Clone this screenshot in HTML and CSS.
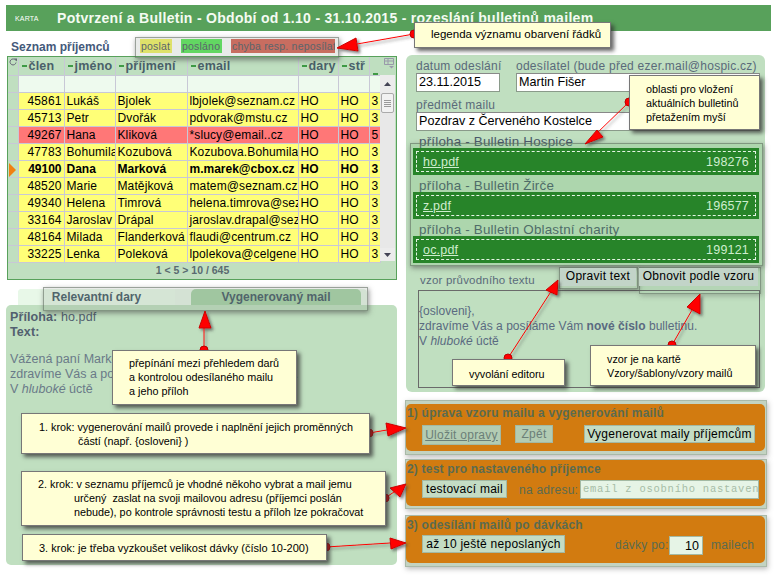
FILE: index.html
```html
<!DOCTYPE html>
<html lang="cs">
<head>
<meta charset="utf-8">
<title>Potvrzení a Bulletin</title>
<link rel="stylesheet" href="styles.css">
</head>
<body>
<div class="app">
  <header class="topbar"><span class="karta">KARTA</span><h1>Potvrzení a Bulletin - Období od 1.10 - 31.10.2015 - rozeslání bulletinů mailem</h1></header>
  <div class="columns">
    <section class="left">
      <div class="listhead">
        <h2>Seznam příjemců</h2>
        <div class="legend"><span class="lg-y">poslat</span><span class="lg-g">posláno</span><span class="lg-r">chyba resp. neposílat</span></div>
      </div>
      <div class="browse">
        <table>
          <colgroup><col class="c0"><col class="c1"><col class="c2"><col class="c3"><col class="c4"><col class="c5"><col class="c6"><col class="c7"></colgroup>
          <thead>
            <tr class="hd"><th><svg class="reload" width="8" height="8" viewBox="0 0 8 8"><path d="M6.5 2.2A3 3 0 1 0 7 4.5" fill="none" stroke="#667"/><path d="M5 .5h3v3z" fill="#667"/></svg></th><th><i></i>člen</th><th><i></i>jméno</th><th><i></i>příjmení</th><th><i></i>email</th><th><i></i>dary</th><th><i></i>stř</th><th class="last"><i></i></th></tr>
            <tr class="flt"><td></td><td></td><td></td><td></td><td></td><td></td><td></td><td></td></tr>
          </thead>
          <tbody>
            <tr><td></td><td class="n">45861</td><td>Lukáš</td><td>Bjolek</td><td>lbjolek@seznam.cz</td><td>HO</td><td>HO</td><td>3</td></tr>
            <tr><td></td><td class="n">45713</td><td>Petr</td><td>Dvořák</td><td>pdvorak@mstu.cz</td><td>HO</td><td>HO</td><td>3</td></tr>
            <tr class="err"><td></td><td class="n">49267</td><td>Hana</td><td>Kliková</td><td>*slucy@email..cz</td><td>HO</td><td>HO</td><td>5</td></tr>
            <tr><td></td><td class="n">47783</td><td>Bohumila</td><td>Kozubová</td><td>Kozubova.Bohumila</td><td>HO</td><td>HO</td><td>3</td></tr>
            <tr class="sel"><td class="mark"><b></b></td><td class="n">49100</td><td>Dana</td><td>Marková</td><td>m.marek@cbox.cz</td><td>HO</td><td>HO</td><td>3</td></tr>
            <tr><td></td><td class="n">48520</td><td>Marie</td><td>Matějková</td><td>matem@seznam.cz</td><td>HO</td><td>HO</td><td>3</td></tr>
            <tr><td></td><td class="n">49340</td><td>Helena</td><td>Timrová</td><td>helena.timrova@sez</td><td>HO</td><td>HO</td><td>3</td></tr>
            <tr><td></td><td class="n">33164</td><td>Jaroslav</td><td>Drápal</td><td>jaroslav.drapal@sez</td><td>HO</td><td>HO</td><td>3</td></tr>
            <tr><td></td><td class="n">48164</td><td>Milada</td><td>Flanderková</td><td>flaudi@centrum.cz</td><td>HO</td><td>HO</td><td>3</td></tr>
            <tr><td></td><td class="n">33225</td><td>Lenka</td><td>Poleková</td><td>lpolekova@celgene</td><td>HO</td><td>HO</td><td>3</td></tr>
          </tbody>
        </table>
        <div class="sbar">
          <div class="sbcfg"><svg width="11" height="11" viewBox="0 0 11 11"><path d="M.5.5h9v6h-9zM.5 3h9M4 .5v6" fill="none" stroke="#99a"/><path d="M5 8h5L7.5 10.500z" fill="#99a"/></svg></div>
          <div class="sbtrack">
            <div class="sbbtn up"><svg width="7" height="4" viewBox="0 0 7 4"><path d="M3.500 0 7 4H0z" fill="#445"/></svg></div>
            <div class="thumb"><i></i><i></i><i></i><i></i></div>
            <div class="sbfill"></div>
            <div class="sbbtn"><svg width="7" height="4" viewBox="0 0 7 4"><path d="M0 0h7L3.500 4z" fill="#445"/></svg></div>
          </div>
        </div>
        <div class="pager">1 &lt; 5 &gt; 10 / 645</div>
      </div>
      <div class="tabs"><div class="tab">Relevantní dary</div><div class="tab on">Vygenerovaný mail</div></div>
      <div class="tabpanel">
        <p class="meta"><b>Příloha:</b> ho.pdf<br><b>Text:</b></p>
        <p class="body">Vážená paní Marková,<br>zdravíme Vás a posíláme Vám <b>nové číslo</b> bulletinu.<br>V <em>hluboké</em> úctě</p>
      </div>
    </section>
    <section class="right">
      <div class="form">
        <div class="frow">
          <label class="fdate">datum odeslání<span class="inp">23.11.2015</span></label>
          <label class="fsend">odesílatel (bude před ezer.mail@hospic.cz)<span class="inp">Martin Fišer</span></label>
        </div>
        <label class="fsubj">předmět mailu<span class="inp">Pozdrav z Červeného Kostelce</span></label>
        <div class="drops">
          <div class="dlabel">příloha - Bulletin Hospice</div>
          <div class="drop"><div class="dash"><a>ho.pdf</a><span>198276</span></div></div>
          <div class="dlabel">příloha - Bulletin Žirče</div>
          <div class="drop"><div class="dash"><a>z.pdf</a><span>196577</span></div></div>
          <div class="dlabel">příloha - Bulletin Oblastní charity</div>
          <div class="drop"><div class="dash"><a>oc.pdf</a><span>199121</span></div></div>
        </div>
        <div class="vzorhead">
          <span class="vzorlabel">vzor průvodního textu</span>
          <span class="hbtn b1">Opravit text</span>
          <span class="hbtn b2">Obnovit podle vzoru</span>
        </div>
        <div class="vzor">{osloveni},<br>zdravíme Vás a posíláme Vám <b>nové číslo</b> bulletinu.<br>V <em>hluboké</em> úctě</div>
      </div>
      <div class="step s1">
        <div class="steph">1) úprava vzoru mailu a vygenerování mailů</div>
        <div class="stepb"><span class="btn off u">Uložit opravy</span><span class="btn off z">Zpět</span><span class="btn gen">Vygenerovat maily příjemcům</span></div>
      </div>
      <div class="step s2">
        <div class="steph">2) test pro nastaveného příjemce</div>
        <div class="stepb"><span class="btn tst">testovací mail</span><span class="lab adr">na adresu:</span><span class="mailinp">email z osobního nastaven</span></div>
      </div>
      <div class="step s3">
        <div class="steph">3) odesílání mailů po dávkách</div>
        <div class="stepb"><span class="btn dvk">až 10 ještě neposlaných</span><span class="lab dav">dávky po:</span><span class="numinp">10</span><span class="lab">mailech</span></div>
      </div>
    </section>
  </div>

  <div class="hl hl-legend"></div>
  <div class="hl hl-tabs"></div>
  <div class="hl hl-drops"></div>
  <div class="hl hl-b1"></div>
  <div class="hl hl-b2"></div>
  <div class="hl hl-s1"></div>
  <div class="hl hl-s2"></div>
  <div class="hl hl-s3"></div>

  <svg class="arrows" width="778" height="577" viewBox="0 0 778 577">
    <defs><filter id="sh" x="-30%" y="-30%" width="180%" height="180%"><feDropShadow dx="2" dy="2" stdDeviation="1.500" flood-color="#444" flood-opacity=".7"/></filter></defs>
    <g stroke="#f00" stroke-width="1" fill="#f00" filter="url(#sh)">
      <path d="M414 34 357 44"/><path d="M337 48 356 38 358 51z" stroke="#c00"/>
      <path d="M629 102 594 136"/><path d="M585 144 597 130 603 137z" stroke="#c00"/>
      <path d="M204 350V328"/><path d="M205 311 199 328H211z" stroke="#c00"/>
      <path d="M369 433 387 430"/><path d="M406 428 386 423 388 436z" stroke="#c00"/>
      <path d="M385 498 397 490"/><path d="M406 484 390 488 400 497z" stroke="#c00"/>
      <path d="M326 547 390 543"/><path d="M406 543 390 538 391 549z" stroke="#c00"/>
      <path d="M508 358 552 290"/><path d="M558 280 546 290 557 295z" stroke="#c00"/>
      <path d="M672 345 692 310"/><path d="M700 294 687 307 700 314z" stroke="#c00"/>
    </g>
    <g fill="#f00" stroke="#b00">
      <circle cx="414" cy="34" r="4"/><circle cx="629" cy="102" r="4"/><circle cx="204" cy="350" r="4"/><circle cx="369" cy="433" r="4"/><circle cx="385" cy="498" r="4"/><circle cx="326" cy="547" r="4"/><circle cx="508" cy="358" r="4"/><circle cx="672" cy="345" r="4"/>
    </g>
  </svg>

  <div class="note n-leg">legenda významu obarvení řádků</div>
  <div class="note n-obl">oblasti pro vložení<br>aktuálních bulletinů<br>přetažením myší</div>
  <div class="note n-tab">přepínání mezi přehledem darů<br>a kontrolou odesílaného mailu<br>a jeho příloh</div>
  <div class="note n-k1"><span>1. krok: vygenerování mailů provede i naplnění jejich proměnných</span><br><span class="ind1">částí (např. {osloveni} )</span></div>
  <div class="note n-k2"><span>2. krok: v seznamu příjemců je vhodné někoho vybrat a mail jemu</span><br><span class="ind2">určený &nbsp;zaslat na svoji mailovou adresu (příjemci poslán</span><br><span class="ind2">nebude), po kontrole správnosti testu a příloh lze pokračovat</span></div>
  <div class="note n-k3">3. krok: je třeba vyzkoušet velikost dávky (číslo 10-200)</div>
  <div class="note n-edi">vyvolání editoru</div>
  <div class="note n-vz">vzor je na kartě<br>Vzory/šablony/vzory mailů</div>
</div>
</body>
</html>
```

FILE: styles.css
```css
* { box-sizing: border-box; }
html, body { margin: 0; padding: 0; background: #fff; }
body { font-family: "Liberation Sans", Arial, sans-serif; font-size: 12px; color: #000; overflow: hidden; }
.app { position: relative; width: 778px; height: 577px; overflow: hidden; padding-top: 5px; }

.topbar { display: flex; align-items: center; margin: 0 7px 0 6px; height: 26px; background: #58a15b; color: #fff; padding-left: 9px; }
.karta { font-size: 7px; width: 42px; letter-spacing: .2px; }
.topbar h1 { margin: 0; font-size: 14px; font-weight: bold; letter-spacing: .29px; white-space: nowrap; color: #f4fbf2; }

.columns { display: flex; align-items: flex-start; }
.left { width: 391px; margin-left: 6px; }
.right { width: 359px; margin-left: 9px; margin-top: 24px; }

.listhead { height: 25px; display: flex; align-items: flex-end; position: relative; }
.listhead h2 { margin: 0 0 2px 5px; font-size: 12px; font-weight: bold; color: #44597a; width: 129px; }
.legend { display: flex; font-size: 10.500px; letter-spacing: .2px; color: #56606a; margin-bottom: 3px; height: 14px; line-height: 14px; }
.lg-y { background: #f4f468; width: 32px; padding-left: 1px; margin-right: 9px; }
.lg-g { background: #5fe85f; width: 41px; padding-left: 1px; margin-right: 9px; }
.lg-r { background: #d8695c; width: 104px; padding-left: 1px; white-space: nowrap; overflow: hidden; }

.browse { position: relative; margin-left: 1px; width: 390px; height: 224px; border: 1px solid #58a15b; background: #c0dfc0; display: grid; grid-template-columns: 372px 16px; grid-template-rows: 204px 18px; }
.browse table { border-collapse: collapse; table-layout: fixed; width: 372px; font-size: 12px; }
.c0 { width: 10px; } .c1 { width: 46px; } .c2 { width: 51px; } .c3 { width: 72px; } .c4 { width: 111px; } .c5 { width: 40px; } .c6 { width: 31px; } .c7 { width: 11px; }
.browse th, .browse td { border-right: 1px solid #c8c8d6; border-bottom: 1px solid #c8c8d6; padding: 0 0 0 2px; white-space: nowrap; overflow: hidden; height: 17px; line-height: 16px; }
.hd th { background: #bfdfc0; height: 18px; text-align: left; font-weight: bold; color: #4a5f6a; font-size: 12.500px; letter-spacing: .2px; padding-left: 3px; }
.hd th i { display: inline-block; width: 5px; height: 2px; background: #3f9a45; margin-right: 2px; vertical-align: 3px; }
.hd th:first-child { padding: 0; position: relative; }
.hd th.last i { vertical-align: -6px; }
.reload { position: absolute; left: 1px; top: 1px; }
.flt td { background: #eefaee; height: 17px; }
.browse tbody td { background: #ffff77; letter-spacing: .12px; }
.browse tbody td:first-child, .flt td:first-child { background: #c0dfc0; }
.browse tbody .err td { background: #ff7777; }
.browse tbody .err td:first-child { background: #c0dfc0; }
.browse .n { text-align: right; padding-right: 2px; padding-left: 0; }
.sel td { font-weight: bold; letter-spacing: 0 !important; }
.browse td.mark { padding: 0; }
.mark b { display: block; width: 0; height: 0; border-left: 7px solid #f08010; border-top: 7px solid transparent; border-bottom: 7px solid transparent; margin: 1px 0 0 1px; }

.sbar { display: flex; flex-direction: column; background: #c0dfc0; }
.sbcfg { height: 18px; padding: 1px 0 0 4px; background: #bfdfc0; }
.sbcfg svg { display: block; }
.sbtrack { flex: 1; display: flex; flex-direction: column; background: #e8e8e8; width: 15px; }
.sbbtn { height: 13px; display: flex; align-items: center; justify-content: center; background: #ececec; }
.sbbtn.up { height: 18px; }
.thumb { height: 20px; margin: 0 1px; border: 1px solid #aaa; border-radius: 2px; background: #f2f2f2; display: flex; flex-direction: column; justify-content: center; gap: 1px; padding: 0 2px; }
.thumb i { height: 1px; background: #999; display: block; }
.sbfill { flex: 1; }
.pager { grid-column: 1 / 3; text-align: center; font-weight: bold; font-size: 10.500px; line-height: 18px; color: #5a6a70; padding-right: 19px; }

.tabs { display: flex; height: 16px; margin: 9px 0 0 12px; background: #e6f5e6; border-radius: 4px 4px 0 0; width: 349px; font-weight: bold; color: #4a5f6a; line-height: 16px; text-align: center; }
.tab { width: 157px; background: #e8f8e8; border-radius: 4px 0 0 0; }
.tab.on { width: 170px; margin-left: 16px; background: #a9d3a9; border-radius: 5px 5px 0 0; }
.tabpanel { height: 260px; background: #c0dfc0; border-radius: 5px; padding: 5px 4px; color: #52606f; font-size: 12.500px; line-height: 15px; }
.tabpanel p { margin: 0; }
.tabpanel .body { margin-top: 12px; color: #6a7a88; }
.meta { letter-spacing: .1px; }

.form { height: 337px; background: #c0dfc0; border-radius: 6px; padding: 4px 5px 0 10px; color: #5a6a7a; letter-spacing: .25px; }
.frow { display: flex; }
label { display: block; font-size: 12px; line-height: 15px; }
.inp { display: block; height: 19px; background: #fff; border: 1px solid #8a9a8a; border-top-color: #888; color: #000; font-size: 12.600px; line-height: 17px; padding-left: 2px; white-space: nowrap; margin-top: -1px; letter-spacing: 0; }
.fdate { width: 84px; white-space: nowrap; }
.fsend { width: 244px; margin-left: 16px; white-space: nowrap; }
.fsubj { width: 344px; margin-top: 6px; }
.drops { margin: 0 0 0 -3px; width: 346px; }
.dlabel { height: 17px; line-height: 22px; padding-left: 6px; font-size: 13.400px; letter-spacing: .2px; color: #4a5a6a; white-space: nowrap; }
.drop { position: relative; z-index: 1; height: 27px; background: #278429; padding: 3px; }
.dash { height: 21px; border: 1px dashed #e4f4e4; display: flex; justify-content: space-between; align-items: center; padding: 0 6px; color: #cfeecf; font-size: 12.500px; letter-spacing: .2px; }
.dash a { text-decoration: underline; }
.vzorhead { position: relative; height: 27px; display: flex; }
.vzorlabel { margin: 10px 0 0 4px; width: 140px; white-space: nowrap; font-size: 11.500px; letter-spacing: .2px; line-height: 15px; }
.hbtn { display: block; position: relative; z-index: 1; height: 18px; margin-top: 5px; line-height: 17px; color: #000; font-size: 12px; letter-spacing: .25px; text-align: center; white-space: nowrap; background: #c2d4c8; }
.b1 { width: 76px; }
.b2 { width: 119px; margin-left: 3px; }
.vzor { width: 342px; height: 98px; border: 1px solid #6a6a6a; margin: 0 0 0 2px; padding-top: 13px; font-size: 12px; line-height: 15px; letter-spacing: .03px; color: #5a6a80; white-space: nowrap; overflow: hidden; }

.step { position: relative; z-index: 1; background: #d27b10; border-radius: 5px; padding: 2px 0 0 1px; }
.s1 { height: 47px; margin-top: 12px; }
.s2 { height: 46px; margin-top: 9px; }
.s3 { height: 47px; margin-top: 10px; }
.steph { font-weight: bold; font-size: 12px; letter-spacing: .2px; color: #5a6b50; line-height: 14px; }
.stepb { display: flex; align-items: flex-start; padding: 5px 0 0 15px; }
.s2 .stepb { padding-top: 4px; }
.s3 .stepb { padding-top: 3px; }
.btn { display: block; height: 18px; line-height: 16px; background: #c4dcc4; border: 1px solid #a3b9a3; color: #000; font-size: 12px; letter-spacing: .25px; text-align: center; white-space: nowrap; }
.btn.off { color: #6b7f78; background: #b3ccb3; }
.u { height: 20px; text-decoration: underline; width: 79px; line-height: 18px; }
.z { margin-left: 14px; width: 38px; }
.gen { margin-left: 31px; width: 171px; }
.tst { width: 85px; }
.dvk { width: 143px; }
.lab { color: #5a6b50; font-size: 12px; letter-spacing: .25px; line-height: 18px; padding-top: 1px; white-space: nowrap; }
.adr { margin-left: 12px; width: 61px; }
.mailinp { width: 179px; height: 19px; background: #e6f4e6; border: 1px solid #a3b9a3; font-family: "Liberation Mono", monospace; font-size: 10.500px; letter-spacing: .75px; color: #a7bda7; line-height: 17px; padding-left: 2px; white-space: nowrap; overflow: hidden; }
.dav { margin-left: 50px; width: 54px; }
.numinp { width: 34px; height: 19px; margin: 1px 8px 0 0; background: #e6f4e6; border: 1px solid #a3b9a3; text-align: right; line-height: 18px; font-size: 12.500px; padding-right: 3px; }

.hl { position: absolute; background: rgba(120,130,120,.16); border: 1px solid rgba(90,100,90,.55); box-shadow: 1px 2px 5px rgba(60,60,60,.55); }
.hl-legend { left: 135px; top: 37px; width: 204px; height: 21px; }
.hl-tabs { left: 43px; top: 287px; width: 325px; height: 24px; }
.hl-drops { left: 410px; top: 143px; width: 353px; height: 123px; background: rgba(100,180,100,.2); }
.hl-b1 { left: 559px; top: 267px; width: 79px; height: 22px; }
.hl-b2 { left: 639px; top: 267px; width: 122px; height: 27px; box-shadow: 1px 2px 5px rgba(60,60,60,.3); background: rgba(100,150,110,.12); }
.hl-s1 { left: 405px; top: 400px; width: 362px; height: 55px; }
.hl-s2 { left: 405px; top: 459px; width: 362px; height: 50px; }
.hl-s3 { left: 405px; top: 515px; width: 362px; height: 52px; }
.hl-s1, .hl-s2, .hl-s3 { background: #c3d3c1; border-color: #a9b9a8; box-shadow: 1px 2px 5px rgba(60,60,60,.35); }

.arrows { position: absolute; left: 0; top: 0; z-index: 2; pointer-events: none; }
.note { position: absolute; z-index: 3; background: #ffffd5; border: 1px solid #777; box-shadow: 3px 3px 4px rgba(50,50,50,.75); color: #000; font-size: 10.800px; line-height: 14px; white-space: nowrap; }
.n-leg { left: 414px; top: 22px; width: 197px; height: 26px; padding: 4px 0 0 16px; font-size: 11.500px; }
.n-obl { left: 629px; top: 75px; width: 131px; height: 55px; padding: 6px 0 0 16px; }
.n-tab { left: 112px; top: 350px; width: 185px; height: 55px; padding: 5px 0 0 16px; }
.n-k1 { left: 21px; top: 413px; width: 349px; height: 41px; padding: 6px 0 0 17px; }
.n-k2 { left: 21px; top: 471px; width: 365px; height: 55px; padding: 5px 0 0 16px; }
.n-k3 { left: 22px; top: 534px; width: 305px; height: 27px; padding: 6px 0 0 16px; font-size: 11px; }
.n-edi { left: 452px; top: 359px; width: 113px; height: 27px; padding: 7px 0 0 16px; }
.n-vz { left: 590px; top: 345px; width: 166px; height: 41px; padding: 6px 0 0 16px; }
.ind1 { padding-left: 39px; }
.ind2 { padding-left: 36px; }
```
